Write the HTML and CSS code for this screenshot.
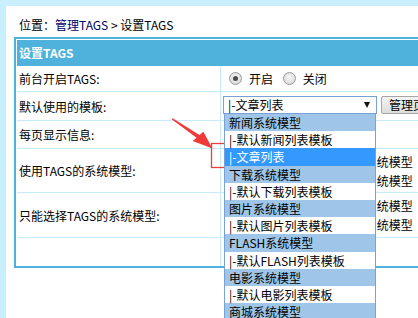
FILE: index.html
```html
<!DOCTYPE html>
<html lang="zh-CN">
<head>
    <meta charset="UTF-8">
    <meta name="viewport" content="width=device-width, initial-scale=1.0">
    <title>设置TAGS</title>
    <link rel="stylesheet" href="styles.css">
</head>
<body>

    <div class="main">
        <div class="place">位置：<a href="#">管理TAGS</a> &gt; 设置TAGS</div>

        <table class="form-table">
            <colgroup>
                <col class="col-label">
                <col>
            </colgroup>
            <tr>
                <th colspan="2">设置TAGS</th>
            </tr>
            <tr class="r1">
                <td class="label">前台开启TAGS:</td>
                <td class="value">
                    <label class="radio"><span class="dot checked"></span>开启</label>
                    <label class="radio"><span class="dot"></span>关闭</label>
                </td>
            </tr>
            <tr class="r2">
                <td class="label">默认使用的模板:</td>
                <td class="value">
                    <div class="tpl">
                        <div class="fake-select">
                            <span>|-文章列表</span>
                            <span class="caret"></span>
                        </div>
                        <button class="btn">管理页面</button>

                        <ul class="options">
                            <li class="group">新闻系统模型</li>
                            <li>|-默认新闻列表模板</li>
                            <li class="selected">|-文章列表</li>
                            <li class="group">下载系统模型</li>
                            <li>|-默认下载列表模板</li>
                            <li class="group">图片系统模型</li>
                            <li>|-默认图片列表模板</li>
                            <li class="group">FLASH系统模型</li>
                            <li>|-默认FLASH列表模板</li>
                            <li class="group">电影系统模型</li>
                            <li>|-默认电影列表模板</li>
                            <li class="group">商城系统模型</li>
                            <li>|-默认商城列表模板</li>
                        </ul>
                    </div>
                </td>
            </tr>
            <tr class="r3">
                <td class="label">每页显示信息:</td>
                <td class="value"><input type="text" class="num" value="20"></td>
            </tr>
            <tr class="r4">
                <td class="label">使用TAGS的系统模型:</td>
                <td class="value">
                    <div class="models">
                        <label class="check"><span class="box"></span>新闻系统模型</label>
                        <label class="check"><span class="box"></span>下载系统模型</label>
                    </div>
                    <div class="models">
                        <label class="check"><span class="box"></span>电影系统模型</label>
                        <label class="check"><span class="box"></span>商城系统模型</label>
                    </div>
                </td>
            </tr>
            <tr class="r5">
                <td class="label">只能选择TAGS的系统模型:</td>
                <td class="value">
                    <div class="models">
                        <label class="check"><span class="box"></span>新闻系统模型</label>
                        <label class="check"><span class="box"></span>下载系统模型</label>
                    </div>
                    <div class="models">
                        <label class="check"><span class="box"></span>电影系统模型</label>
                        <label class="check"><span class="box"></span>商城系统模型</label>
                    </div>
                </td>
            </tr>
            <tr class="r6">
                <td class="label"></td>
                <td class="value"><button class="btn">保 存</button></td>
            </tr>
        </table>
    </div>

    <!-- annotation drawn on top of the screenshot -->
    <svg class="mark" width="418" height="318" viewBox="0 0 418 318">
        <polygon points="212.5,148.5 203.3,131.7 199.5,135.1 172.7,118.2 171.7,119.2 196.5,137.7 192.7,141" fill="#f03a3a"/>
        <rect x="211.5" y="143.5" width="125" height="24" fill="none" stroke="#e8403a" stroke-width="1.3"/>
    </svg>

</body>
</html>
```

FILE: styles.css
```css
html, body {
    margin: 0;
    padding: 0;
    overflow: hidden;
}

body {
    background-color: #c9eefc;
    font-family: "Noto Sans CJK SC", "Microsoft YaHei", sans-serif;
    font-size: 12px;
    color: #000;
}

.main {
    margin: 6px 0 0 6px;
    height: 312px;
    padding-left: 8px;
    background-color: #fff;
    overflow: hidden;
}

.place {
    padding: 9px 0 0 5px;
    height: 20px;
    line-height: 20px;
    margin-bottom: 2px;
}

.place a {
    color: #000066;
    text-decoration: none;
}

.form-table {
    width: 440px;
    border: 2px solid #4eb2dc;
    padding: 1px 1px 0 1px;
    border-collapse: separate;
    border-spacing: 0;
    table-layout: fixed;
}

.col-label {
    width: 204px;
}

.form-table th {
    height: 26px;
    padding: 0 0 0 2px;
    background-color: #4eb2dc;
    color: #fff;
    font-weight: bold;
    text-align: left;
    line-height: 26px;
}

.form-table td {
    box-sizing: border-box;
    padding: 0;
    border-bottom: 1px solid #c6ecfb;
    white-space: nowrap;
}

.form-table td.label {
    padding-left: 2px;
    border-right: 1px solid #c6ecfb;
}

.form-table .value {
    padding-left: 2px;
}

.r1 td { height: 26px; }
.r2 td { height: 29px; }
.r3 td { height: 28px; }
.r4 td { height: 44px; }
.r5 td { height: 45px; }
.r6 td { height: 28px; border-bottom: none; }

.r2 .value {
    vertical-align: top;
    padding-top: 4px;
}

/* radios */
.radio {
    display: inline-flex;
    align-items: center;
    margin-right: 7px;
}

.r1 .radio:first-child {
    margin-left: 6px;
}

.dot {
    width: 11px;
    height: 11px;
    border: 1px solid #9a9a9a;
    border-radius: 50%;
    background: radial-gradient(circle at 50% 40%, #f6f6f6, #d2d2d2);
    margin-right: 7px;
    position: relative;
}

.dot.checked::after {
    content: "";
    position: absolute;
    left: 3px;
    top: 3px;
    width: 5px;
    height: 5px;
    border-radius: 50%;
    background-color: #4a4a4a;
}

/* select box with its open list */
.tpl {
    position: relative;
    display: flex;
    align-items: center;
}

.fake-select {
    box-sizing: border-box;
    width: 154px;
    height: 18px;
    border: 1px solid #7aa0d8;
    padding: 0 6px 0 4px;
    display: flex;
    align-items: center;
    justify-content: space-between;
    line-height: 16px;
    background-color: #fff;
}

.caret {
    width: 0;
    height: 0;
    border-left: 3.5px solid transparent;
    border-right: 3.5px solid transparent;
    border-top: 6px solid #111;
}

.btn {
    height: 18px;
    margin-left: 4px;
    padding: 0 7px;
    border: 1px solid #a6a6a6;
    border-radius: 2px;
    background: linear-gradient(#f4f4f4, #dcdcdc);
    font-family: inherit;
    font-size: 12px;
    line-height: 16px;
    color: #000;
}

.r6 .btn {
    margin-left: 6px;
}

.options {
    position: absolute;
    left: 1px;
    top: 18px;
    width: 150px;
    margin: 0;
    padding: 0;
    list-style: none;
    border-left: 1px solid #7aa0d8;
    border-right: 1px solid #7aa0d8;
    background-color: #fff;
    z-index: 10;
}

.options li {
    height: 17.2px;
    line-height: 17px;
    padding-left: 4px;
    white-space: nowrap;
}

.options li.group {
    background-color: #9fc6e8;
}

.options li.selected {
    background-color: #3399ff;
    color: #fff;
}

.num {
    width: 40px;
    height: 14px;
    margin-left: 4px;
    border: 1px solid #a6a6a6;
    font-size: 12px;
}

/* checkbox lists */
.models {
    height: 19px;
    line-height: 19px;
    padding-left: 3px;
}

.check {
    display: inline-flex;
    align-items: center;
    width: 96px;
}

.box {
    width: 11px;
    height: 11px;
    border: 1px solid #9a9a9a;
    background: linear-gradient(#f6f6f6, #d8d8d8);
    margin-right: 3px;
}

.mark {
    position: absolute;
    left: 0;
    top: 0;
    pointer-events: none;
}
```
